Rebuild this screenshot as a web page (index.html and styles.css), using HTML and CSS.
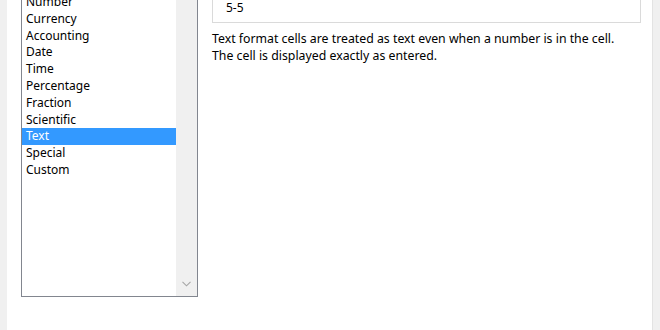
FILE: index.html
```html
<!DOCTYPE html>
<html>
<head>
    <title>Format Cells - Number</title>
    <link rel="stylesheet" href="styles.css">
</head>
<body>

    <div class="frame">
        <div class="edge"></div>
        <div class="panel">
            <div class="category">
                <ul class="list">
                    <li class="item">Number</li>
                    <li class="item">Currency</li>
                    <li class="item">Accounting</li>
                    <li class="item">Date</li>
                    <li class="item">Time</li>
                    <li class="item">Percentage</li>
                    <li class="item">Fraction</li>
                    <li class="item">Scientific</li>
                    <li class="item selected">Text</li>
                    <li class="item">Special</li>
                    <li class="item">Custom</li>
                </ul>
                <div class="scrollbar">
                    <svg class="arrow" width="9" height="6" viewBox="0 0 9 6">
                        <path d="M0.5 0.8 L4.5 4.8 L8.5 0.8" fill="none" stroke="#a6a6a6" stroke-width="1.1"/>
                    </svg>
                </div>
            </div>
            <div class="details">
                <div class="sample">5-5</div>
                <p class="desc">Text format cells are treated as text even when a number is in the cell.<br>The cell is displayed exactly as entered.</p>
            </div>
        </div>
        <div class="edge edge-right"></div>
    </div>

</body>
</html>
```

FILE: styles.css
```css
body {
    margin: 0;
    width: 660px;
    height: 330px;
    overflow: hidden;
    background: #f0f0f0;
    font-family: "Noto Sans", "Open Sans", sans-serif;
    font-size: 12px;
    color: #000;
}
.frame {
    display: flex;
    height: 330px;
}
.edge {
    width: 7px;
    background: #f0f0f0;
}
.edge-right {
    border-left: 1px solid #e3e3e3;
}
.panel {
    flex: 1;
    display: flex;
    align-items: flex-start;
    gap: 14px;
    background: #fff;
    padding-left: 14px;
    margin-top: -10px;
}
.category {
    display: flex;
    width: 175px;
    height: 305px;
    border: 1px solid #82868f;
    background: #fff;
}
.list {
    flex: 1;
    list-style: none;
    margin: 0;
    padding: 3px 0 0;
}
.item {
    height: 16.8px;
    line-height: 16.8px;
    padding-left: 4px;
    white-space: nowrap;
}
.item.selected {
    background: #3399ff;
    color: #fff;
}
.scrollbar {
    width: 21px;
    background: #f0f0f0;
    display: flex;
    align-items: flex-end;
    justify-content: center;
}
.arrow {
    margin-bottom: 9px;
}
.details {
    width: 429px;
}
.sample {
    height: 33px;
    border: 1px solid #dadada;
    padding-left: 13px;
    line-height: 17px;
    display: flex;
    align-items: flex-end;
    padding-bottom: 6px;
    box-sizing: border-box;
}
.desc {
    margin: 7px 0 0;
    font-size: 12.3px;
    line-height: 17px;
}
```
